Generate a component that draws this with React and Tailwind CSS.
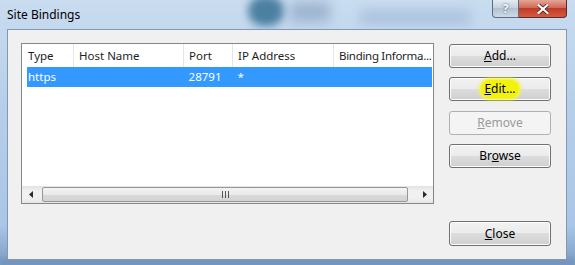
import React from "react";

const cols = [
  { label: "Type", w: "w-[51px]" },
  { label: "Host Name", w: "w-[110px]" },
  { label: "Port", w: "w-[49px]" },
  { label: "IP Address", w: "w-[101px]" },
  { label: "Binding Informa...", w: "w-[100px] tracking-[-0.3px]" },
];

const row = ["https", "", "28791", "*", ""];

const WinButton = ({ children, disabled = false, className = "" }) => (
  <div
    className={`h-[24px] w-[102px] rounded-[3px] border flex items-center justify-center text-[12px] ${
      disabled
        ? "border-[#adb2b5] bg-[#f4f4f4] text-[#9a9a9a]"
        : "border-[#707070] bg-[linear-gradient(#f2f2f2_0%,#ebebeb_50%,#dddddd_50%,#cfcfcf_100%)] text-black shadow-[inset_0_0_0_1px_#fcfcfc]"
    } ${className}`}
  >
    {children}
  </div>
);

const Key = ({ children }) => <span className="underline underline-offset-1">{children}</span>;

export default function App() {
  return (
    <div className="relative w-[575px] h-[265px] overflow-hidden bg-[linear-gradient(180deg,#c9dcf0_0%,#b6cfe9_40%,#a9c6e6_85%,#7b9cc4_100%)] font-['Noto_Sans',sans-serif]">
      {/* blurred glass backdrop */}
      <div className="absolute left-[248px] top-[-4px] w-[36px] h-[30px] rounded-full bg-[#2d6a8e] blur-[4px] opacity-80" />
      <div className="absolute left-[290px] top-[2px] w-[40px] h-[20px] bg-[#8ea6c4] blur-[6px] opacity-70" />
      <div className="absolute left-[360px] top-[10px] w-[110px] h-[14px] bg-[#9fb8d6] blur-[6px] opacity-70" />
      <div className="absolute left-[0px] top-[258px] w-[575px] h-[8px] bg-[#6e8fb9] blur-[2px] opacity-70" />

      <div className="relative flex flex-col h-full pl-[7px] pr-[8px] pb-[5px]">
        {/* title bar */}
        <div className="flex h-[29px] shrink-0">
          <div className="pt-[6px] text-[12px] text-black">Site Bindings</div>
          <div className="ml-auto flex h-[18px]">
            <div className="w-[27px] h-full rounded-bl-[4px] border border-t-0 border-[#5d6d80] bg-[linear-gradient(#e4ebf2,#c3cfdc_50%,#b3c2d3_50%,#cdd9e5)] flex items-center justify-center text-[12px] font-bold text-[#f4f7fb] [text-shadow:0_0_2px_#3a4a5c]">
              ?
            </div>
            <div className="w-[48px] h-full rounded-br-[4px] border border-l-0 border-t-0 border-[#5a2a24] bg-[linear-gradient(#e8a497,#cf6a59_45%,#c13a26_50%,#d65a40_100%)] flex items-center justify-center">
              <svg width="12" height="10" viewBox="0 0 12 10">
                <path d="M1.5 1 L10.5 9 M10.5 1 L1.5 9" stroke="#3a1510" strokeWidth="3.6" strokeLinecap="square" />
                <path d="M1.5 1 L10.5 9 M10.5 1 L1.5 9" stroke="#ffffff" strokeWidth="2.2" strokeLinecap="square" />
              </svg>
            </div>
          </div>
        </div>

        {/* client area */}
        <div className="flex-1 flex bg-[#f0f0f0] border border-[#8397b0] pl-[13px] pt-[13px] text-[11.5px]">
          {/* list view */}
          <div className="w-[413px] h-[161px] border border-[#828790] bg-white flex flex-col">
            <div className="flex h-[23px] shrink-0 bg-white">
              {cols.map((c, i) => (
                <div
                  key={c.label}
                  className={`${c.w} ${i === 0 ? "pl-[6px]" : "pl-[5px] border-l border-[#e3e6ea]"} h-full flex items-center text-[#1e1e1e] whitespace-nowrap overflow-hidden`}
                >
                  {c.label}
                </div>
              ))}
            </div>
            <div className="flex h-[20px] ml-[5px] mr-[1px] bg-[#3399ff] text-white">
              {row.map((v, i) => (
                <div
                  key={i}
                  className={`${i === 0 ? "pl-[1px] w-[46px]" : `${cols[i].w} pl-[6px]`} flex items-center`}
                >
                  {v}
                </div>
              ))}
            </div>
            <div className="flex-1" />
            {/* horizontal scrollbar */}
            <div className="h-[17px] flex items-center bg-[linear-gradient(#e3e3e3,#f1f1f1_30%,#f1f1f1_70%,#e6e6e6)]">
              <div className="w-[17px] h-full flex items-center justify-center">
                <svg width="4" height="7" viewBox="0 0 4 7">
                  <path d="M4 0 L0 3.5 L4 7 Z" fill="#2b2b2b" />
                </svg>
              </div>
              <div className="ml-[3px] w-[366px] h-[15px] rounded-[2px] border border-[#979797] bg-[linear-gradient(#f3f3f3,#e9e9e9_50%,#d9d9d9_50%,#d3d3d3)] flex items-center justify-center gap-[2px]">
                <span className="w-[1px] h-[7px] bg-[#555]" />
                <span className="w-[1px] h-[7px] bg-[#555]" />
                <span className="w-[1px] h-[7px] bg-[#555]" />
              </div>
              <div className="ml-auto w-[17px] h-full flex items-center justify-center">
                <svg width="4" height="7" viewBox="0 0 4 7">
                  <path d="M0 0 L4 3.5 L0 7 Z" fill="#2b2b2b" />
                </svg>
              </div>
            </div>
          </div>

          {/* buttons */}
          <div className="ml-[15px] mt-[1px] flex flex-col">
            <WinButton>
              <span>
                <Key>A</Key>dd...
              </span>
            </WinButton>
            <WinButton className="mt-[9px]">
              <span className="px-[3px] rounded-full bg-[#f2f20c] shadow-[0_0_3px_2px_#f5f53a]">
                <Key>E</Key>dit...
              </span>
            </WinButton>
            <WinButton disabled className="mt-[10px]">
              <span>
                <Key>R</Key>emove
              </span>
            </WinButton>
            <WinButton className="mt-[9px]">
              <span>
                Br<Key>o</Key>wse
              </span>
            </WinButton>
            <WinButton className="mt-[53px] h-[25px]">
              <span>
                <Key>C</Key>lose
              </span>
            </WinButton>
          </div>
        </div>
      </div>
    </div>
  );
}
